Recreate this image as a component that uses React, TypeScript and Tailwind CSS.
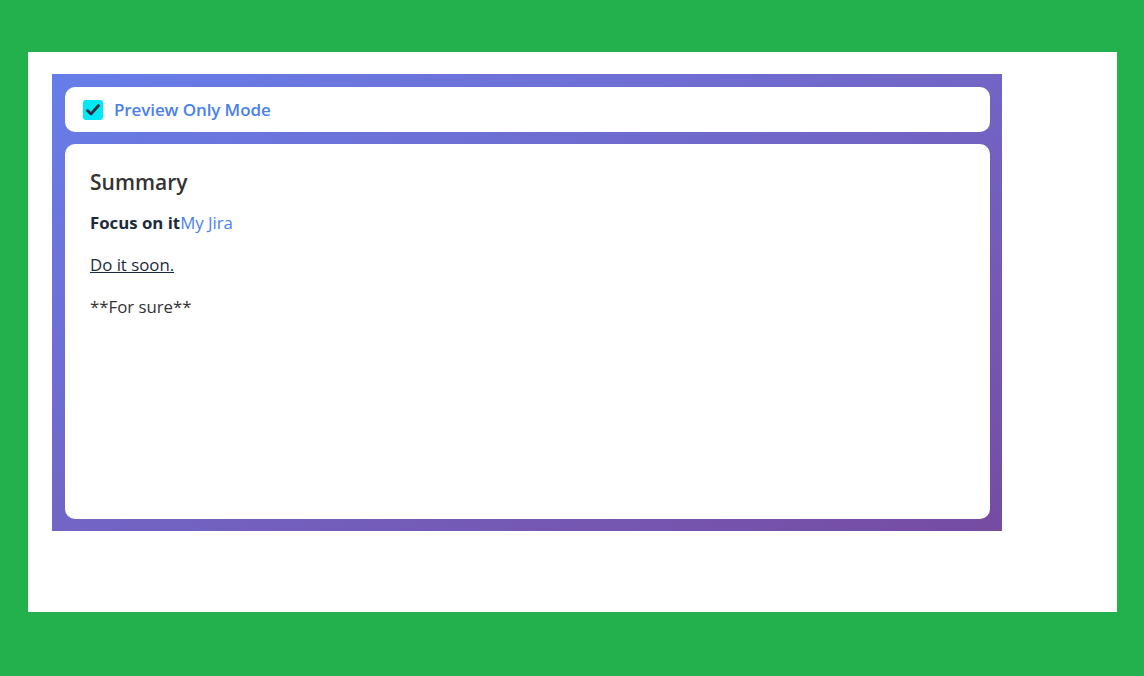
export default function App() {
  return (
    <div className="w-[1144px] h-[676px] bg-[#22b14c] pt-[52px] pl-[28px]" style={{ fontFamily: '"Open Sans", "Noto Sans", sans-serif' }}>
      <div className="w-[1089px] h-[560px] bg-white pt-[22px] pl-[24px]">
        <div className="w-[950px] h-[457px] bg-gradient-to-br from-[#667eea] to-[#764ba2] pt-[13px] pb-[12px] px-[13px] flex flex-col gap-[12px]">
          <div className="h-[45px] w-[925px] bg-white rounded-[10px] flex items-center pl-[18px] gap-[11px]">
            <div className="w-[20px] h-[20px] bg-[#00e8f8] rounded-[3px] flex items-center justify-center">
              <svg width="16" height="16" viewBox="0 0 16 16">
                <path d="M2.5 8.5 L6 12 L13.5 3.5" fill="none" stroke="#2d2d3a" strokeWidth="2.8" strokeLinecap="round" strokeLinejoin="round" />
              </svg>
            </div>
            <span className="text-[17px] font-semibold text-[#4a7ff0] tracking-[-0.1px]">Preview Only Mode</span>
          </div>
          <div className="flex-1 w-[925px] bg-white rounded-[10px] pl-[25px] pt-[23px]">
            <div className="text-[21px] font-semibold text-[#333] leading-[30px]">Summary</div>
            <div className="mt-[15px] text-[16.8px] leading-[22px]">
              <span className="font-bold text-[#1c2b3c]">Focus on it</span>
              <a className="text-[#4a80f0]">My Jira</a>
            </div>
            <div className="mt-[20px] text-[16.8px] leading-[22px] text-[#1c2b3c] underline">Do it soon.</div>
            <div className="mt-[20px] text-[16.8px] leading-[22px] text-[#333]">**For sure**</div>
          </div>
        </div>
      </div>
    </div>
  );
}
